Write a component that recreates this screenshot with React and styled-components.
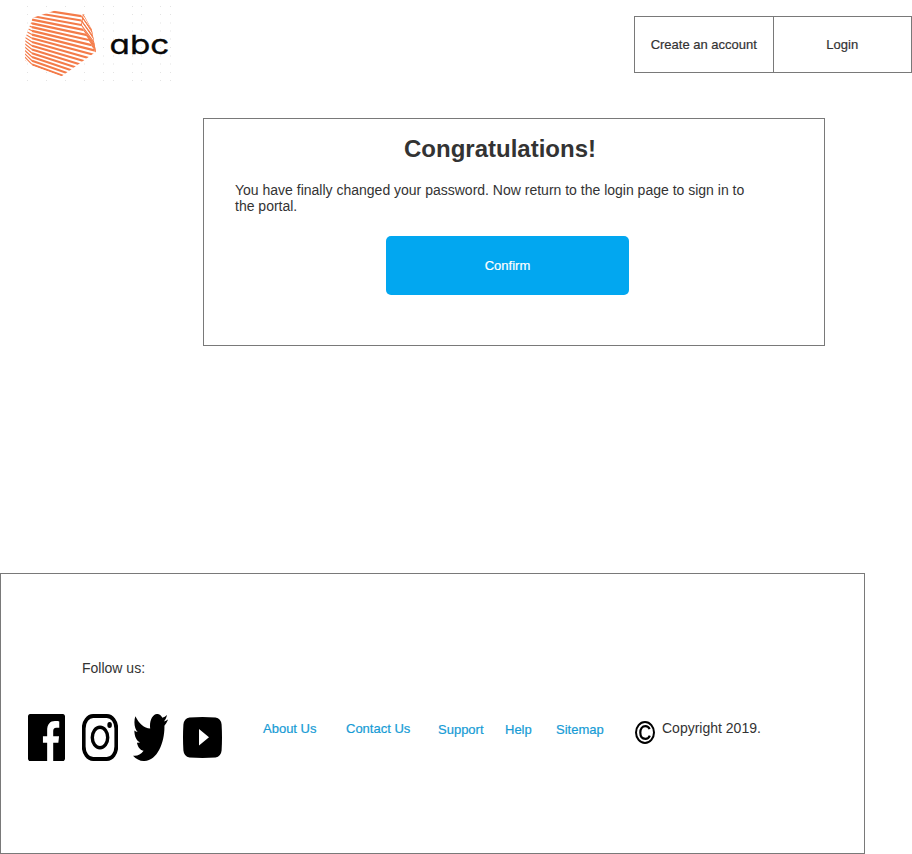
import React from "react";
import styled, { createGlobalStyle } from "styled-components";

const GlobalStyle = createGlobalStyle`
  * { box-sizing: border-box; }
  body { margin: 0; background: #fff; color: #333; font-family: "Liberation Sans", Arial, sans-serif; }
`;

const Page = styled.div`
  width: 912px;
  height: 854px;
  display: flex;
  flex-direction: column;
  overflow: hidden;
`;

const Header = styled.header`
  height: 118px;
  display: flex;
  justify-content: space-between;
  align-items: flex-start;
`;

const LogoArt = styled.svg`
  display: block;
  width: 200px;
  height: 90px;
`;

const Wordmark = styled.text`
  font-family: Inter, sans-serif;
  font-size: 26px;
  font-weight: 400;
  font-feature-settings: "cv11" 1;
  fill: #080808;
  stroke: #080808;
  stroke-width: 0.35px;
`;

const AccountNav = styled.nav`
  display: flex;
  width: 278px;
  height: 57px;
  margin-top: 16px;
  border: 1px solid #797979;
`;

const NavButton = styled.button`
  flex: 1;
  padding: 0 0 1px;
  border: 0;
  background: #fff;
  color: #333;
  font: 13px "Liberation Sans", Arial, sans-serif;
  -webkit-text-stroke: 0.2px currentColor;
  & + & { border-left: 1px solid #797979; }
`;

const Card = styled.main`
  width: 622px;
  height: 228px;
  margin-left: 203px;
  padding: 16px 31px 0;
  border: 1px solid #797979;
`;

const Title = styled.h1`
  margin: 0 0 0 169px;
  font-size: 24px;
  line-height: 28px;
  white-space: nowrap;
`;

const Message = styled.p`
  width: 530px;
  margin: 19px 0 22px;
  font-size: 14px;
  line-height: 16px;
`;

const ConfirmButton = styled.button`
  display: block;
  width: 243px;
  height: 59px;
  margin-left: 151px;
  padding: 0;
  border: 0;
  border-radius: 5px;
  background: #02a7f0;
  color: #fff;
  font: 13px "Liberation Sans", Arial, sans-serif;
  -webkit-text-stroke: 0.2px currentColor;
`;

const Footer = styled.footer`
  width: 865px;
  height: 281px;
  margin-top: 227px;
  padding: 86px 0 0 27px;
  border: 1px solid #797979;
`;

const FollowLabel = styled.div`
  margin-left: 54px;
  font-size: 14px;
  line-height: 16px;
`;

const FooterRow = styled.div`
  display: flex;
  margin-top: 38px;
`;

const SocialLinks = styled.div`
  display: flex;
  align-items: flex-start;
  width: 235px;
`;

const Icon = styled.svg`
  display: block;
  flex: none;
  width: ${(p) => p.$w}px;
  height: ${(p) => p.$h}px;
  margin: ${(p) => p.$top || 0}px ${(p) => p.$gap || 0}px 0 0;
`;

const FooterLink = styled.a`
  width: ${(p) => p.$w}px;
  margin-top: ${(p) => p.$top}px;
  color: #169bd5;
  font-size: 13px;
  line-height: 15px;
  white-space: nowrap;
  -webkit-text-stroke: 0.2px currentColor;
`;

const Copyright = styled.div`
  display: flex;
  padding-top: 6px;
  font-size: 14px;
  line-height: 16px;
  white-space: nowrap;
`;

// Each stripe crosses the front face, meets the ridge and folds down the side.
const stripes = Array.from({ length: 19 }, (_, k) => {
  const left = -12 + k * 11.2;
  const slope = 0.13 + k * 0.014;
  const atX = (x) => left + (x - 38) * slope;
  let x = 184;
  if (atX(x) > 62) {
    x = (left - 38 * slope - 62 + 184 * 1.9) / (1.9 - slope);
  }
  const y = atX(x);
  return {
    front: `M36 ${left} L${x} ${y}`,
    folds: `M8 ${left - k * 1.7} L36 ${left} M${x} ${y} l50 68`,
  };
});

const dotColumns = [27, 46, 65, 84, 103, 113, 132, 141, 160, 170];
const dotRows = [6.5, 14.5, 23, 31, 39, 47.5, 56, 64, 72.5, 80.5];

function Logo() {
  return (
    <LogoArt viewBox="0 0 200 90" role="img" aria-label="abc">
      <defs>
        <clipPath id="gem">
          <path d="M110 15 L190 28 L215 72 L228 140 L125 214 L38 182 L15 165 L16 100 L38 38Z" />
        </clipPath>
      </defs>
      {dotRows.map((y) =>
        dotColumns.map((x) => (
          <rect key={`${x}-${y}`} x={x} y={y - 0.5} width="1" height="1" fill="#e3e3e3" />
        ))
      )}
      <g transform="translate(20 5) scale(.3333)" clipPath="url(#gem)" fill="none" stroke="#f47b49">
        <path d="M110 15 L190 28 L215 72 L228 140 L125 214 L38 182 L15 165 L16 100 L38 38Z" fill="#fff" stroke="none" />
        {stripes.map(({ front, folds }) => (
          <g key={front}>
            <path d={front} strokeWidth="6.4" />
            <path d={folds} strokeWidth="3.4" />
          </g>
        ))}
        <path d="M190 28 L184 62 M190 28 L215 72 L228 140 M188 38 l40 62 M186 49 l40 60" strokeWidth="3" />
      </g>
      <Wordmark transform="translate(109.6 54) scale(1.28 1)">abc</Wordmark>
    </LogoArt>
  );
}

function Facebook() {
  return (
    <Icon $w={37} $h={47} $gap={17} viewBox="0 0 24 24" preserveAspectRatio="none">
      <path d="M22.676 0H1.324C.593 0 0 .593 0 1.324v21.352C0 23.408.593 24 1.324 24h11.1v-9.294H9.689v-3.4h2.735V8.41c0-3.099 1.894-4.785 5.053-4.785 1.325 0 2.464.097 2.796.141v3.24h-1.921c-1.5 0-2.002.721-2.002 1.771v2.53h3.794l-.465 3.4H16.35V24h6.325c.733 0 1.325-.592 1.325-1.324V1.324C24 .593 23.408 0 22.676 0" />
    </Icon>
  );
}

function Instagram() {
  return (
    <Icon $w={36} $h={47} $gap={15} viewBox="0 0 36 47" fill="none" stroke="#000">
      <rect x="1.7" y="2" width="32.6" height="43" rx="9.5" ry="12.5" strokeWidth="3.8" />
      <ellipse cx="18" cy="23.5" rx="7.7" ry="10.2" strokeWidth="3.4" />
      <ellipse cx="27.6" cy="11" rx="2.3" ry="3" fill="#000" stroke="none" />
    </Icon>
  );
}

function Twitter() {
  return (
    <Icon $w={35} $h={47} $gap={15} viewBox="0 2.25 24 19.5" preserveAspectRatio="none">
      <path d="M23.954 4.569c-.885.389-1.83.654-2.825.775 1.014-.611 1.794-1.574 2.163-2.723-.951.555-2.005.959-3.127 1.184-.896-.959-2.173-1.559-3.591-1.559-2.717 0-4.92 2.203-4.92 4.917 0 .39.045.765.127 1.124C7.691 8.094 4.066 6.13 1.64 3.161c-.427.722-.666 1.561-.666 2.475 0 1.71.87 3.213 2.188 4.096-.807-.026-1.566-.248-2.228-.616v.061c0 2.385 1.693 4.374 3.946 4.827-.413.111-.849.171-1.296.171-.314 0-.615-.03-.916-.086.631 1.953 2.445 3.377 4.604 3.417-1.68 1.319-3.809 2.105-6.102 2.105-.39 0-.779-.023-1.17-.067 2.189 1.394 4.768 2.209 7.557 2.209 9.054 0 13.999-7.496 13.999-13.986 0-.209 0-.42-.015-.63.961-.689 1.8-1.56 2.46-2.548z" />
    </Icon>
  );
}

function YouTube() {
  return (
    <Icon $w={39} $h={41} $top={3} viewBox="0 0 39 41">
      <path
        fillRule="evenodd"
        d="M6.5 .5Q19.5-.4 32.5 .5Q38 1.5 38.6 7.5Q39.4 20.5 38.6 33.5Q38 39.5 32.5 40.5Q19.5 41.4 6.5 40.5Q1 39.5.4 33.5Q-.4 20.5.4 7.5Q1 1.5 6.5 .5ZM16 12V28.5L26 20.3Z"
      />
    </Icon>
  );
}

function CopyrightMark() {
  return (
    <Icon $w={20} $h={23} $gap={7} $top={1} viewBox="0 0 20 23" fill="none" stroke="#000">
      <ellipse cx="10" cy="11.5" rx="9" ry="10.5" strokeWidth="2" />
      <path d="M14.6 8.2C13.7 6 12.3 5.2 10.4 5.2C7.3 5.2 5.3 7.7 5.3 11.5C5.3 15.4 7.3 17.8 10.4 17.8C12.4 17.8 13.9 16.8 14.8 14.6" strokeWidth="2.2" />
    </Icon>
  );
}

const links = [
  { label: "About Us", w: 83, top: 7 },
  { label: "Contact Us", w: 92, top: 7 },
  { label: "Support", w: 67, top: 8 },
  { label: "Help", w: 51, top: 8 },
  { label: "Sitemap", w: 79, top: 8 },
];

export default function App() {
  return (
    <Page>
      <GlobalStyle />
      <Header>
        <Logo />
        <AccountNav>
          <NavButton>Create an account</NavButton>
          <NavButton>Login</NavButton>
        </AccountNav>
      </Header>
      <Card>
        <Title>Congratulations!</Title>
        <Message>
          You have finally changed your password. Now return to the login page to sign in to the portal.
        </Message>
        <ConfirmButton>Confirm</ConfirmButton>
      </Card>
      <Footer>
        <FollowLabel>Follow us:</FollowLabel>
        <FooterRow>
          <SocialLinks>
            <Facebook />
            <Instagram />
            <Twitter />
            <YouTube />
          </SocialLinks>
          {links.map((link) => (
            <FooterLink key={link.label} $w={link.w} $top={link.top}>
              {link.label}
            </FooterLink>
          ))}
          <Copyright>
            <CopyrightMark />
            Copyright 2019.
          </Copyright>
        </FooterRow>
      </Footer>
    </Page>
  );
}
